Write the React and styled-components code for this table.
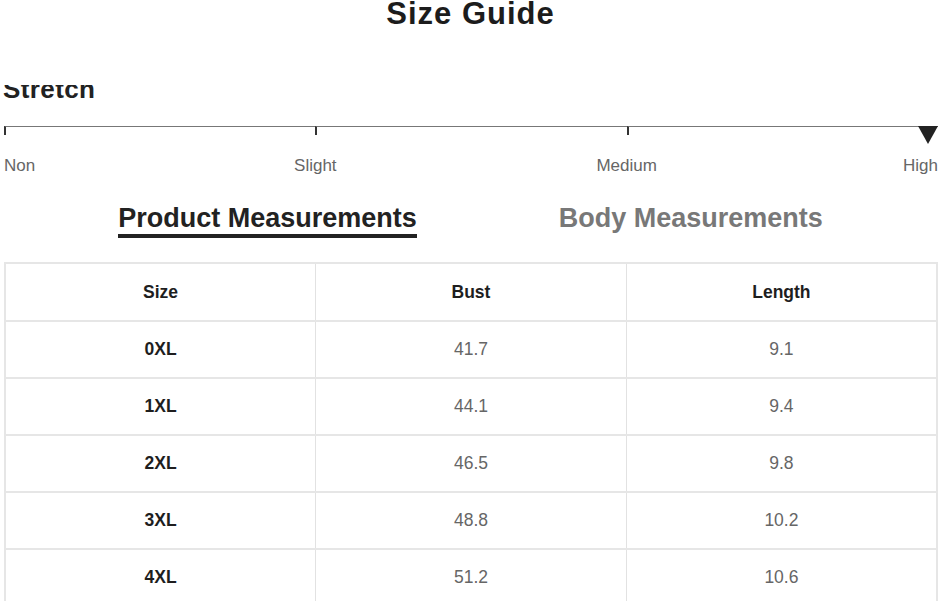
import React from 'react';
import styled, { createGlobalStyle } from 'styled-components';

const GlobalStyle = createGlobalStyle`
  html, body {
    margin: 0;
    padding: 0;
    background: #fff;
  }
  body {
    font-family: 'Liberation Sans', Arial, sans-serif;
  }
`;

const Page = styled.div`
  width: 941px;
  height: 601px;
  overflow: hidden;
  background: #fff;
`;

const Title = styled.h1`
  margin: -4px 0 0;
  text-align: center;
  font-size: 31px;
  line-height: 36px;
  font-weight: bold;
  letter-spacing: 1px;
  color: #1c1c1c;
`;

/* scrolled panel: its top is cut by the header */
const Viewport = styled.div`
  margin-top: 53px;
  height: 516px;
  overflow: hidden;
`;

const Content = styled.div`
  margin-top: -11px;
`;

const SectionHeading = styled.h2`
  margin: 0 0 0 3px;
  font-size: 26px;
  line-height: 30px;
  font-weight: bold;
  letter-spacing: 0.4px;
  color: #222;
`;

const Scale = styled.div`
  margin: 22px 3px 0 4px;
`;

const Track = styled.div`
  position: relative;
  display: flex;
`;

const Segment = styled.div`
  flex: 1;
  height: 8px;
  border-top: 1.5px solid #777;
  border-left: ${({ $tick }) => ($tick ? '2px solid #333' : 'none')};
`;

const Marker = styled.div`
  position: absolute;
  right: 0;
  top: 0;
  width: 0;
  height: 0;
  border-left: 10px solid transparent;
  border-right: 10px solid transparent;
  border-top: 18px solid #222;
`;

const Labels = styled.div`
  display: grid;
  grid-template-columns: repeat(6, 1fr);
  margin-top: 21px;
`;

const Label = styled.span`
  grid-column: ${({ $col }) => $col};
  justify-self: ${({ $align }) => $align};
  font-size: 17px;
  line-height: 20px;
  color: #666;
`;

const Tabs = styled.div`
  display: flex;
  justify-content: center;
  gap: 142px;
  margin-top: 27px;
`;

const Tab = styled.div`
  font-size: 27px;
  line-height: 30px;
  font-weight: bold;
  padding-bottom: 1px;
  color: ${({ $active }) => ($active ? '#222' : '#787878')};
  border-bottom: 4px solid ${({ $active }) => ($active ? '#222' : 'transparent')};
`;

const Table = styled.table`
  margin: 24px 3px 0 4px;
  width: 934px;
  border-collapse: collapse;
  table-layout: fixed;
  border: 2px solid #e6e6e6;
`;

const Cell = styled.td`
  height: ${({ $head }) => ($head ? '56px' : '55px')};
  padding: 0;
  text-align: center;
  font-size: 17.5px;
  border-top: 2px solid #e6e6e6;
  border-left: 1px solid #e2e2e2;
  font-weight: ${({ $strong }) => ($strong ? 'bold' : 'normal')};
  color: ${({ $strong }) => ($strong ? '#1e1e1e' : '#666')};
`;

const rows = [
  ['0XL', '41.7', '9.1'],
  ['1XL', '44.1', '9.4'],
  ['2XL', '46.5', '9.8'],
  ['3XL', '48.8', '10.2'],
  ['4XL', '51.2', '10.6'],
];

const labels = [
  { text: 'Non', col: '1 / 2', align: 'start' },
  { text: 'Slight', col: '2 / 4', align: 'center' },
  { text: 'Medium', col: '4 / 6', align: 'center' },
  { text: 'High', col: '6 / 7', align: 'end' },
];

export default function App() {
  return (
    <Page>
      <GlobalStyle />
      <Title>Size Guide</Title>
      <Viewport>
        <Content>
          <SectionHeading>Stretch</SectionHeading>
          <Scale>
            <Track>
              <Segment $tick />
              <Segment $tick />
              <Segment $tick />
              <Marker />
            </Track>
            <Labels>
              {labels.map((l) => (
                <Label key={l.text} $col={l.col} $align={l.align}>
                  {l.text}
                </Label>
              ))}
            </Labels>
          </Scale>
          <Tabs>
            <Tab $active>Product Measurements</Tab>
            <Tab>Body Measurements</Tab>
          </Tabs>
          <Table>
            <thead>
              <tr>
                <Cell as="th" $head $strong>Size</Cell>
                <Cell as="th" $head $strong>Bust</Cell>
                <Cell as="th" $head $strong>Length</Cell>
              </tr>
            </thead>
            <tbody>
              {rows.map(([size, bust, length]) => (
                <tr key={size}>
                  <Cell $strong>{size}</Cell>
                  <Cell>{bust}</Cell>
                  <Cell>{length}</Cell>
                </tr>
              ))}
            </tbody>
          </Table>
        </Content>
      </Viewport>
    </Page>
  );
}
